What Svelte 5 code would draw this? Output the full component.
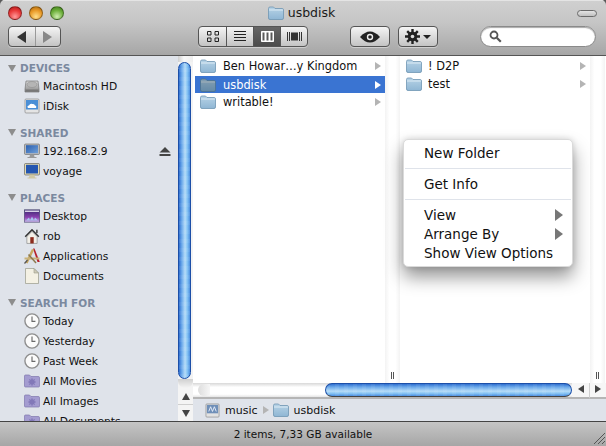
<script>
  const groups = [
    { title: 'DEVICES', items: [['hd', 'Macintosh HD'], ['idisk', 'iDisk']] },
    { title: 'SHARED', items: [['monitor', '192.168.2.9', true], ['imac', 'voyage']] },
    { title: 'PLACES', items: [['desktop', 'Desktop'], ['home', 'rob'], ['apps', 'Applications'], ['doc', 'Documents']] },
    { title: 'SEARCH FOR', items: [['clock', 'Today'], ['clock', 'Yesterday'], ['clock', 'Past Week'], ['smart', 'All Movies'], ['smart', 'All Images'], ['smart', 'All Documents']] }
  ];
  const col1 = ['Ben Howar…y Kingdom', 'usbdisk', 'writable!'];
  const col2 = ['! D2P', 'test'];
</script>

<svg class="defs" width="0" height="0" aria-hidden="true">
  <defs>
    <linearGradient id="fg" x1="0" y1="0" x2="0" y2="1"><stop offset="0" stop-color="#b7d3e6"/><stop offset="1" stop-color="#8fb6d4"/></linearGradient>
    <linearGradient id="hdg" x1="0" y1="0" x2="0" y2="1"><stop offset="0" stop-color="#d8d8d8"/><stop offset="1" stop-color="#8a8a8a"/></linearGradient>
    <linearGradient id="scr" x1="0" y1="0" x2="1" y2="1"><stop offset="0" stop-color="#2a5fb0"/><stop offset="1" stop-color="#6f9fd8"/></linearGradient>
    <linearGradient id="desk" x1="0" y1="0" x2="0" y2="1"><stop offset="0" stop-color="#3b2a70"/><stop offset=".6" stop-color="#8a3fb0"/><stop offset="1" stop-color="#c9b8e8"/></linearGradient>
    <symbol id="folder" viewBox="0 0 16 14">
      <path d="M.5 2.500q0-1.500 1.500-1.500h3.500l1.500 1.500h7q1.500 0 1.500 1.500v8q0 1.500-1.500 1.500h-12q-1.500 0-1.500-1.500z" fill="url(#fg)" stroke="#6f95b3" stroke-width=".8"/>
      <path d="M1 4h14" stroke="#dcebf5" stroke-width="1"/>
    </symbol>
    <symbol id="hd" viewBox="0 0 16 16">
      <path d="M2 3h12l1 8v3H1v-3z" fill="url(#hdg)" stroke="#666" stroke-width=".6"/>
      <ellipse cx="8" cy="6.500" rx="5" ry="3" fill="#b5b5b5" stroke="#888" stroke-width=".5"/>
      <rect x="1.500" y="11.500" width="13" height="2" fill="#777"/>
    </symbol>
    <symbol id="idisk" viewBox="0 0 16 16">
      <rect x="1" y="1" width="14" height="14" rx="1" fill="#e4e4e4" stroke="#8a8a8a" stroke-width=".7"/>
      <rect x="2" y="2" width="12" height="9.500" fill="#4a8fd6"/>
      <path d="M4 10q-1.500-2 1-2.500 1-2.500 3.500-1.500 2-.5 2.500 1.500 2 .5 1 2.500z" fill="#fff"/>
    </symbol>
    <symbol id="monitor" viewBox="0 0 16 16">
      <rect x=".5" y="1" width="15" height="10.500" rx="1" fill="#b9b9b9" stroke="#666" stroke-width=".6"/>
      <rect x="2" y="2.200" width="12" height="8" fill="url(#scr)"/>
      <path d="M6 11.500h4l.5 2.500h2v1h-9v-1h2z" fill="#999"/>
    </symbol>
    <symbol id="imac" viewBox="0 0 16 16">
      <rect x=".5" y=".5" width="15" height="11.500" rx="1" fill="#e2d9ae" stroke="#555" stroke-width=".6"/>
      <rect x="2" y="1.800" width="12" height="8.700" fill="#2456b0"/>
      <path d="M5.500 12h5l.5 2.500h1.500v1h-9v-1h1.500z" fill="#cfc8a4"/>
    </symbol>
    <symbol id="desktop" viewBox="0 0 16 13">
      <rect x=".3" y=".3" width="15.400" height="12.400" fill="url(#desk)" stroke="#4a4a70" stroke-width=".6"/>
      <path d="M1 1h14v1.500H1z" fill="#d8d2e8"/>
      <path d="M2 11l3-3 1 3 2-4 2 4 1-3 3 3z" fill="#a8c4ee"/>
    </symbol>
    <symbol id="home" viewBox="0 0 14 14">
      <path d="M7 .7L.6 7.300l1 .8L7 2.700l5.400 5.400 1-.8z" fill="#333"/>
      <path d="M2.500 7.500L7 3l4.500 4.500V13.500h-9z" fill="#f2efe8" stroke="#777" stroke-width=".5"/>
      <rect x="5.500" y="8" width="3" height="5.500" fill="#8c2b1c"/>
      <rect x="10.500" y="1.500" width="1.500" height="3" fill="#555"/>
    </symbol>
    <symbol id="apps" viewBox="0 0 16 16">
      <path d="M9 .5L13.500 14h2.300L10.500.5z" fill="#b5202a"/>
      <path d="M9 1.500L2.500 15" stroke="#c8a860" stroke-width="2.400" fill="none"/>
      <path d="M.5 10.500h15" stroke="#c9b27a" stroke-width="2"/>
      <path d="M4.500 6.500L12 15" stroke="#8c7a50" stroke-width="1.500"/>
      <path d="M.5 15.500l3-3.500" stroke="#555" stroke-width="1.200"/>
    </symbol>
    <symbol id="doc" viewBox="0 0 14 16">
      <path d="M.5.500h8.500l4.500 4.500v10.500h-13z" fill="#f4f1e4" stroke="#9a9a8a" stroke-width=".7"/>
      <path d="M9 .5V5h4.500z" fill="#cfcbb8" stroke="#9a9a8a" stroke-width=".6"/>
    </symbol>
    <symbol id="clock" viewBox="0 0 14 14">
      <circle cx="7" cy="7" r="6.200" fill="#fbfbfb" stroke="#8e8e8e" stroke-width="1.200"/>
      <path d="M7 3v4.300h3" fill="none" stroke="#6a6a6a" stroke-width="1"/>
    </symbol>
    <symbol id="smart" viewBox="0 0 16 14">
      <path d="M.5 2q0-1 1-1h4l1.500 1.500h7q1.500 0 1.500 1v8.500q0 1-1 1h-13q-1 0-1-1z" fill="#a49cd0" stroke="#7f77ad" stroke-width=".7"/>
      <circle cx="8" cy="8" r="2.800" fill="#8279b8"/><circle cx="8" cy="8" r="1" fill="#b8b2de"/>
      <path d="M8 4.200v7.600M4.200 8h7.600M5.300 5.300l5.400 5.400M10.700 5.300l-5.400 5.400" stroke="#8279b8" stroke-width="1"/>
    </symbol>
    <symbol id="music" viewBox="0 0 16 16">
      <rect x="1" y="1" width="14" height="14" rx="1" fill="#e2e2e2" stroke="#8a8a8a" stroke-width=".7"/>
      <rect x="2" y="2" width="12" height="9" fill="#6f8fb8"/>
      <path d="M4 9l2-5 2 5 2-5 2 5" fill="none" stroke="#e6eefa" stroke-width="1"/>
    </symbol>
  </defs>
</svg>

<div class="window">
  <header class="toolbar">
    <div class="titlerow">
      <div class="lights">
        <span class="light red"></span><span class="light amber"></span><span class="light green"></span>
      </div>
      <div class="title"><svg class="ti" width="16" height="14"><use href="#folder"/></svg><span>usbdisk</span></div>
      <span class="pill"></span>
    </div>
    <div class="toolrow">
      <div class="seg nav">
        <button aria-label="Back"><i class="tri left dark"></i></button>
        <button aria-label="Forward"><i class="tri right dim"></i></button>
      </div>
      <div class="seg views">
        <button class="v" aria-label="Icons">
          <svg width="12" height="11"><path d="M.5.500h3.500v3.500H.5zM8 .5h3.500v3.500H8zM.5 7h3.500v3.500H.5zM8 7h3.500v3.500H8z" fill="none" stroke="#222"/></svg>
        </button>
        <button class="v" aria-label="List">
          <svg width="12" height="11"><path d="M0 .5h12M0 3.500h12M0 6.500h12M0 9.500h12" stroke="#222"/></svg>
        </button>
        <button class="v active" aria-label="Columns">
          <svg width="13" height="11"><path d="M.5.500h12v10H.5zM4.500.5v10M8.500.5v10" fill="#fff" stroke="#fff"/><path d="M1.500 1.500h2v8h-2zM5.500 1.500h2v8h-2zM9.500 1.500h2v8h-2z" fill="#5a5a5a"/></svg>
        </button>
        <button class="v" aria-label="Cover Flow">
          <svg width="15" height="11"><path d="M.5 1v9M2.500 1v9M12.500 1v9M14.500 1v9" stroke="#333"/><rect x="4" y="1.500" width="7" height="8" fill="#333"/></svg>
        </button>
      </div>
      <button class="tb eye" aria-label="Quick Look">
        <svg width="22" height="12" viewBox="0 0 22 12"><path d="M1 6q10-11 20 0q-10 11-20 0z" fill="#222"/><circle cx="11" cy="6" r="3.200" fill="#eee"/><circle cx="11" cy="6" r="1.800" fill="#222"/></svg>
      </button>
      <button class="tb gear" aria-label="Action">
        <svg width="15" height="15" viewBox="0 0 15 15"><circle cx="7.500" cy="7.500" r="4.800" fill="#222"/><path d="M7.500 0v15M0 7.500h15M2.200 2.200l10.600 10.600M12.800 2.200L2.200 12.800" stroke="#222" stroke-width="2.400"/><circle cx="7.500" cy="7.500" r="1.800" fill="#ddd"/></svg>
        <i class="caret"></i>
      </button>
      <div class="search">
        <svg width="13" height="13" viewBox="0 0 13 13"><circle cx="5" cy="5" r="3.500" fill="none" stroke="#555" stroke-width="1.800"/><path d="M7.800 7.800l4 4" stroke="#555" stroke-width="2.200"/></svg>
      </div>
    </div>
  </header>

  <div class="main">
    <aside class="sidebar">
      {#each groups as g}
        <section class="group">
          <h2><i class="disclose"></i>{g.title}</h2>
          {#each g.items as it}
            <div class="sitem">
              <svg class="sicon" width="16" height="16"><use href={'#' + it[0]}/></svg>
              <span>{it[1]}</span>
              {#if it[2]}
                <svg class="eject" width="12" height="9"><path d="M6 0l5.500 5.500H.5z M.5 7h11v2H.5z" fill="#444"/></svg>
              {/if}
            </div>
          {/each}
        </section>
      {/each}
    </aside>

    <div class="vscroll">
      <div class="cap top"></div>
      <div class="vthumb"></div>
      <div class="cap bottom"></div>
      <div class="varrow"><i class="tri up"></i></div>
      <div class="varrow line"><i class="tri down"></i></div>
    </div>

    <div class="pane">
      <div class="columns">
        <div class="col first">
          {#each col1 as name, i}
            <div class="row" class:sel={i === 1}>
              <svg width="16" height="14"><use href="#folder"/></svg>
              <span>{name}</span>
              <i class="tri right small"></i>
            </div>
          {/each}
        </div>
        <div class="grip"><b></b></div>
        <div class="col second">
          {#each col2 as name}
            <div class="row">
              <svg width="16" height="14"><use href="#folder"/></svg>
              <span>{name}</span>
              <i class="tri right small"></i>
            </div>
          {/each}
        </div>
        <div class="grip"><b></b></div>

        <div class="menu">
          <div class="mi">New Folder</div>
          <hr />
          <div class="mi">Get Info</div>
          <hr />
          <div class="mi sub">View<i class="tri right msub"></i></div>
          <div class="mi sub">Arrange By<i class="tri right msub"></i></div>
          <div class="mi">Show View Options</div>
        </div>
      </div>

      <div class="hscroll">
        <div class="track">
          <div class="hcap"></div>
          <div class="hthumb"></div>
        </div>
        <div class="harrow"><i class="tri left sm"></i></div>
        <div class="harrow line"><i class="tri right sm dark"></i></div>
      </div>

      <div class="path">
        <svg width="15" height="15"><use href="#music"/></svg>
        <span>music</span>
        <i class="tri right small"></i>
        <svg class="pf" width="16" height="14"><use href="#folder"/></svg>
        <span>usbdisk</span>
      </div>
    </div>
  </div>

  <footer class="status">
    <span>2 items, 7,33 GB available</span>
    <svg class="resize" width="11" height="11"><path d="M0 11L11 0M4 11l7-7M8 11l3-3" stroke="#555" stroke-width="1"/></svg>
  </footer>
</div>

<style>
  :global(body) { margin: 0; background: #5a5a5a; }
  .defs { position: absolute; }
  i { display: block; font-style: normal; }
  button { padding: 0; margin: 0; font: inherit; }

  .window {
    width: 606px; height: 446px; display: flex; flex-direction: column; overflow: hidden;
    font-family: "DejaVu Sans", sans-serif; font-size: 11px; color: #111;
    border-radius: 5px 5px 0 0; position: relative;
  }

  .toolbar {
    height: 55px; flex: none; box-sizing: content-box; border-bottom: 1px solid #555;
    background: linear-gradient(#d0d0d0 0, #c6c6c6 22px, #a6a6a6 55px);
    box-shadow: inset 0 1px 0 #e4e4e4;
    display: flex; flex-direction: column;
  }
  .titlerow { height: 26px; flex: none; position: relative; display: flex; align-items: center; justify-content: center; }
  .lights { position: absolute; left: 8px; top: 6px; display: flex; gap: 7px; }
  .light { width: 14px; height: 14px; border-radius: 50%; box-sizing: border-box; border: 1px solid rgba(0,0,0,.35); }
  .red { background: radial-gradient(circle at 50% 80%, #ff9a9a 0, #ea3a3a 55%, #a81818 100%); }
  .amber { background: radial-gradient(circle at 50% 80%, #ffdf8a 0, #e99a28 55%, #a8640c 100%); }
  .green { background: radial-gradient(circle at 50% 80%, #cfeeb0 0, #6eb03c 55%, #3c7a18 100%); }
  .title { display: flex; align-items: center; gap: 4px; font-size: 12.5px; color: #1a1a1a; margin: -1px 3px 0 0; }
  .pill {
    position: absolute; right: 9px; top: 10px; width: 20px; height: 7px; box-sizing: border-box;
    border: 1px solid #6a6a6a; border-radius: 4px; background: linear-gradient(#e4e4e4, #c0c0c0);
  }

  .toolrow { display: flex; align-items: flex-start; padding-left: 8px; }
  .seg {
    display: flex; height: 21px; box-sizing: border-box; border: 1px solid #555; border-radius: 4px; overflow: hidden;
    background: linear-gradient(#f4f4f4, #c4c4c4); box-shadow: 0 1px 0 rgba(255,255,255,.4);
  }
  .seg button {
    border: 0; background: none; display: flex; align-items: center; justify-content: center; height: 100%;
  }
  .seg button + button { border-left: 1px solid #555; }
  .nav button { width: 25.500px; }
  .nav button + button { border-left-color: #999; }
  .views { margin-left: 137px; }
  .v { width: 27px; }
  .seg .v.active { background: linear-gradient(#666, #4c4c4c); }
  .tb {
    height: 21px; width: 40px; box-sizing: border-box; border: 1px solid #555; border-radius: 4px;
    background: linear-gradient(#f4f4f4, #c4c4c4); display: flex; align-items: center; justify-content: center; gap: 3px;
    box-shadow: 0 1px 0 rgba(255,255,255,.4);
  }
  .eye { margin-left: 42px; }
  .gear { margin-left: 8px; }
  .caret { width: 0; height: 0; border: 4px solid transparent; border-top: 4px solid #222; border-bottom: 0; }
  .search {
    margin-left: 42px; width: 116px; height: 21px; box-sizing: border-box; border-radius: 11px; background: #fff;
    border: 1px solid #8a8a8a; box-shadow: inset 0 1px 1px #aaa; display: flex; align-items: center; padding-left: 8px;
  }

  .main { flex: 1; min-height: 0; display: flex; }
  .sidebar { width: 178px; flex: none; background: #dfe3ea; overflow: hidden; padding-top: 4px; box-sizing: border-box; font-size: 10.7px; }
  .group { margin-bottom: 8px; }
  h2 {
    margin: 0; height: 17px; display: flex; align-items: center; padding-left: 8px; gap: 4px;
    font-size: 10.5px; font-weight: bold; color: #7b899f;
  }
  .disclose { width: 0; height: 0; border: 4px solid transparent; border-top: 7px solid #8d8d8d; border-bottom: 0; }
  .group:first-child h2 { height: 16px; }
  .sitem { height: 20px; display: flex; align-items: center; padding-left: 24px; gap: 3px; position: relative; }
  .sicon { flex: none; }
  .eject { position: absolute; left: 159px; top: 6px; }

  .vscroll {
    width: 15px; flex: none; display: flex; flex-direction: column; background: #f3f3f3;
    box-sizing: border-box; align-items: stretch;
  }
  .cap { flex: none; background: linear-gradient(90deg, #cfcfcf, #f8f8f8 40%, #eee); }
  .cap.top { height: 6px; }
  .cap.bottom { height: 9px; border-radius: 0 0 7px 7px; background: linear-gradient(#d0d0d0, #f4f4f4); }
  .vthumb {
    height: 317px; flex: none; box-sizing: border-box; margin: 0 2px 0 0; border: 1px solid #1c4fa8; border-radius: 7px;
    background:
      repeating-linear-gradient(0deg, rgba(255,255,255,.06) 0 4px, rgba(255,255,255,0) 4px 9px),
      linear-gradient(90deg, #2f6fd0 0, #6aa8ea 25%, #b5dcf8 55%, #86c4f4 75%, #4a8ee0 100%);
  }
  .varrow { height: 16px; flex: none; display: flex; align-items: center; justify-content: center; background: #f4f4f4; }
  .varrow.line { border-top: 1px solid #cfcfcf; height: 17px; box-sizing: border-box; }

  .pane { flex: 1; min-width: 0; display: flex; flex-direction: column; }
  .columns { height: 327px; flex: none; display: flex; background: #fff; position: relative; font-size: 11.4px; }
  .col { padding-top: 1px; box-sizing: border-box; }
  .first { width: 192px; padding-left: 2px; }
  .second { width: 190px; }
  .grip { width: 15px; flex: none; background: linear-gradient(90deg, #f3f3f3, #fff 30%, #fff 70%, #f3f3f3); position: relative; }
  .grip:last-of-type { flex: 1; }
  .grip b { position: absolute; left: 6px; bottom: 4px; width: 1px; height: 7px; border-left: 1px solid #555; border-right: 1px solid #555; box-sizing: content-box; }
  .row { height: 18px; display: flex; align-items: center; padding-left: 5px; gap: 7px; position: relative; }
  .row.sel { background: #3a74d2 content-box; color: #fff; border-top: 1px solid #fff; box-sizing: border-box; padding-top: 0; padding-left: 0; }
  .row.sel svg { filter: brightness(.75) saturate(1.3); margin-left: 5px; }
  .row .small { position: absolute; right: 4px; }
  .second .row { padding-left: 6px; gap: 6px; }
  .row.sel .small { border-left-color: #fff; }

  .tri { width: 0; height: 0; border-style: solid; border-color: transparent; flex: none; }
  .tri.left { border-width: 6px 9px 6px 0; border-right-color: #333; }
  .tri.right { border-width: 6px 0 6px 9px; border-left-color: #333; }
  .tri.dim { border-left-color: #888; }
  .tri.small { border-width: 4px 0 4px 6px; border-left-color: #b4b4b4; }
  .tri.up { border-width: 0 4px 7px 4px; border-bottom-color: #444; }
  .tri.down { border-width: 7px 4px 0 4px; border-top-color: #444; }
  .tri.sm { border-top-width: 4px; border-bottom-width: 4px; }
  .tri.sm.left { border-right-width: 6px; border-right-color: #444; }
  .tri.sm.right { border-left-width: 6px; border-left-color: #444; }
  .tri.msub { position: absolute; right: 9px; top: 3px; border-width: 6px 0 6px 8px; border-left-color: #777; }

  .menu {
    position: absolute; left: 210px; top: 83px; width: 170px; height: 128px; box-sizing: border-box;
    background: #fff; border: 1px solid #dadada; border-radius: 5px; padding-top: 4px;
    box-shadow: 0 10px 18px rgba(0,0,0,.42), 0 0 6px rgba(0,0,0,.14);
    font-size: 13.5px; color: #111;
  }
  .mi { height: 19px; line-height: 19px; padding-left: 20px; position: relative; white-space: nowrap; }
  .menu hr { border: 0; border-top: 1px solid #dfe3ea; margin: 5px 1px 6px; }

  .hscroll { height: 16px; flex: none; display: flex; background: #f3f3f3; box-shadow: inset 0 -2px 0 #b5b5b5; }
  .track { flex: 1; display: flex; background: linear-gradient(#d8d8d8, #fff 30%, #fff 80%, #e5e5e5); justify-content: flex-end; position: relative; border-bottom: 2px solid #b5b5b5; }
  .hcap { position: absolute; left: 5px; top: 1px; width: 12px; height: 12px; border-radius: 7px 0 0 7px; background: linear-gradient(90deg, #ddd, #f6f6f6); }
  .hthumb {
    width: 247px; height: 14px; box-sizing: border-box; border: 1px solid #1c4fa8; border-bottom-color: #444; border-radius: 7px;
    background:
      repeating-linear-gradient(90deg, rgba(255,255,255,.06) 0 4px, rgba(255,255,255,0) 4px 9px),
      linear-gradient(#2f6fd0 0, #6aa8ea 25%, #b5dcf8 60%, #86c4f4 78%, #4a8ee0 100%);
  }
  .harrow { width: 17px; flex: none; display: flex; align-items: center; justify-content: center; padding-bottom: 2px; box-sizing: border-box; background: #f6f6f6; border-bottom: 2px solid #b5b5b5; }
  .harrow.line { border-left: 1px solid #cfcfcf; }

  .path { flex: 1; min-height: 0; background: #dfe3ea; display: flex; align-items: center; padding-left: 12px; gap: 5px; }
  .path .small { margin: 0; }
  .path .pf { margin-left: -1px; }

  .status {
    height: 25px; flex: none; box-sizing: border-box; border-top: 1px solid #444;
    background: linear-gradient(#c5c5c5, #a6a6a6); font-size: 10.5px;
    display: flex; align-items: center; justify-content: center; position: relative;
  }
  .status span { padding-bottom: 1px; }
  .resize { position: absolute; right: 1px; bottom: 2px; }
</style>
